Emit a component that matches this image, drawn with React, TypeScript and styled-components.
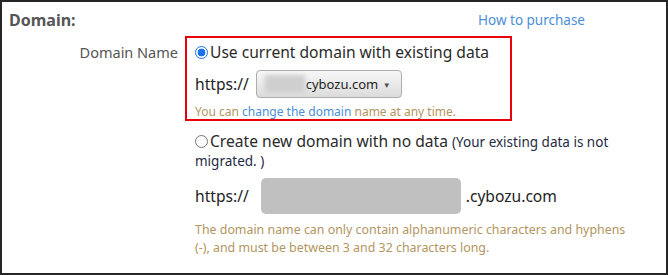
import React from "react";
import styled, { createGlobalStyle } from "styled-components";

const GlobalStyle = createGlobalStyle`
  html, body {
    margin: 0;
    padding: 0;
    background: #fff;
  }
  body {
    font-family: "Noto Sans", "Open Sans", sans-serif;
  }
`;

const Frame = styled.div`
  box-sizing: border-box;
  width: 668px;
  height: 275px;
  border: 2px solid #262626;
  background: #fff;
  overflow: hidden;
`;

const Header = styled.div`
  display: flex;
  justify-content: space-between;
  align-items: center;
  padding: 7px 81px 0 7px;
  height: 22px;
`;

const Title = styled.h2`
  margin: 0;
  font-size: 16px;
  line-height: 22px;
  font-weight: 700;
  color: #555;
`;

const Link = styled.a`
  color: #4a8fd8;
  text-decoration: none;
  cursor: pointer;
`;

const PurchaseLink = styled(Link)`
  font-size: 13.5px;
  line-height: 22px;
`;

const Form = styled.div`
  display: grid;
  grid-template-columns: 176px 1fr;
  column-gap: 7px;
  margin-top: 5px;
`;

const FieldLabel = styled.div`
  text-align: right;
  font-size: 14.5px;
  line-height: 22px;
  padding-top: 5px;
  color: #555;
`;

const FieldBody = styled.div`
  display: flex;
  flex-direction: column;
  align-items: flex-start;
`;

const HighlightBox = styled.div`
  box-sizing: border-box;
  width: 327px;
  border: 2px solid #e8000b;
  padding: 3px 8px 0 8px;
`;

const OptionRow = styled.label`
  display: flex;
  align-items: center;
  font-size: 15.6px;
  line-height: 22px;
  color: #2a2a2a;
  cursor: pointer;
`;

const Radio = styled.span<{ $checked?: boolean }>`
  box-sizing: border-box;
  flex: none;
  display: inline-block;
  width: 13px;
  height: 13px;
  margin-right: 2px;
  border-radius: 50%;
  border: 1px solid ${({ $checked }) => ($checked ? "#1a73e8" : "#767676")};
  background: ${({ $checked }) =>
    $checked
      ? "radial-gradient(circle, #1a73e8 0 3.6px, #fff 4.2px)"
      : "#fff"};
  vertical-align: -1px;
`;

const UrlRow = styled.div<{ $gap: number }>`
  display: flex;
  align-items: center;
  gap: ${({ $gap }) => $gap}px;
  font-size: 15.6px;
  color: #222;
`;

const SelectBox = styled.div`
  box-sizing: border-box;
  display: flex;
  align-items: center;
  width: 146px;
  height: 28px;
  padding: 0 10px 0 8px;
  border: 1px solid #adadad;
  border-radius: 4px;
  background: linear-gradient(#f7f7f7, #dcdcdc);
  font-size: 13px;
  color: #1f1f1f;
`;

const Blurred = styled.span`
  display: inline-block;
  width: 40px;
  height: 18px;
  background: #cfcfcf;
  filter: blur(2px);
  margin-right: 1px;
`;

const Caret = styled.span`
  margin-left: auto;
  font-size: 8px;
  color: #555;
`;

const Note = styled.p<{ $top: number; $lh: number; $size: number }>`
  margin: ${({ $top }) => $top}px 0 0;
  font-size: ${({ $size }) => $size}px;
  line-height: ${({ $lh }) => $lh}px;
  color: #b3955f;
`;

const OtherOption = styled.div`
  box-sizing: border-box;
  width: 455px;
  padding-left: 10px;
  margin-top: 11px;
`;

const WrapText = styled.div`
  font-size: 15.6px;
  line-height: 18px;
  color: #2a2a2a;
`;

const Small = styled.span`
  font-size: 13.5px;
  color: #1f2a44;
`;

const TextInput = styled.div`
  width: 200px;
  height: 36px;
  border-radius: 5px;
  background: #c0c0c0;
`;

const Suffix = styled.span`
  margin-left: -7px;
`;

export default function App() {
  return (
    <>
      <GlobalStyle />
      <Frame>
        <Header>
          <Title>Domain:</Title>
          <PurchaseLink>How to purchase</PurchaseLink>
        </Header>
        <Form>
          <FieldLabel>Domain Name</FieldLabel>
          <FieldBody>
            <HighlightBox>
              <OptionRow>
                <Radio $checked />
                Use current domain with existing data
              </OptionRow>
              <UrlRow $gap={7} style={{ marginTop: 7 }}>
                https://
                <SelectBox>
                  <Blurred />
                  cybozu.com
                  <Caret>▼</Caret>
                </SelectBox>
              </UrlRow>
              <Note $top={6} $lh={15} $size={12}>
                You can <Link>change the domain</Link> name at any time.
              </Note>
            </HighlightBox>
            <OtherOption>
              <WrapText>
                <Radio />Create new domain with no data{" "}
                <Small>(Your existing data is not</Small>{" "}
                <Small>migrated. )</Small>
              </WrapText>
              <UrlRow $gap={12} style={{ marginTop: 8 }}>
                https://
                <TextInput />
                <Suffix>.cybozu.com</Suffix>
              </UrlRow>
              <Note $top={7} $lh={18} $size={12.4}>
                The domain name can only contain alphanumeric characters and
                hyphens (-), and must be between 3 and 32 characters long.
              </Note>
            </OtherOption>
          </FieldBody>
        </Form>
      </Frame>
    </>
  );
}
